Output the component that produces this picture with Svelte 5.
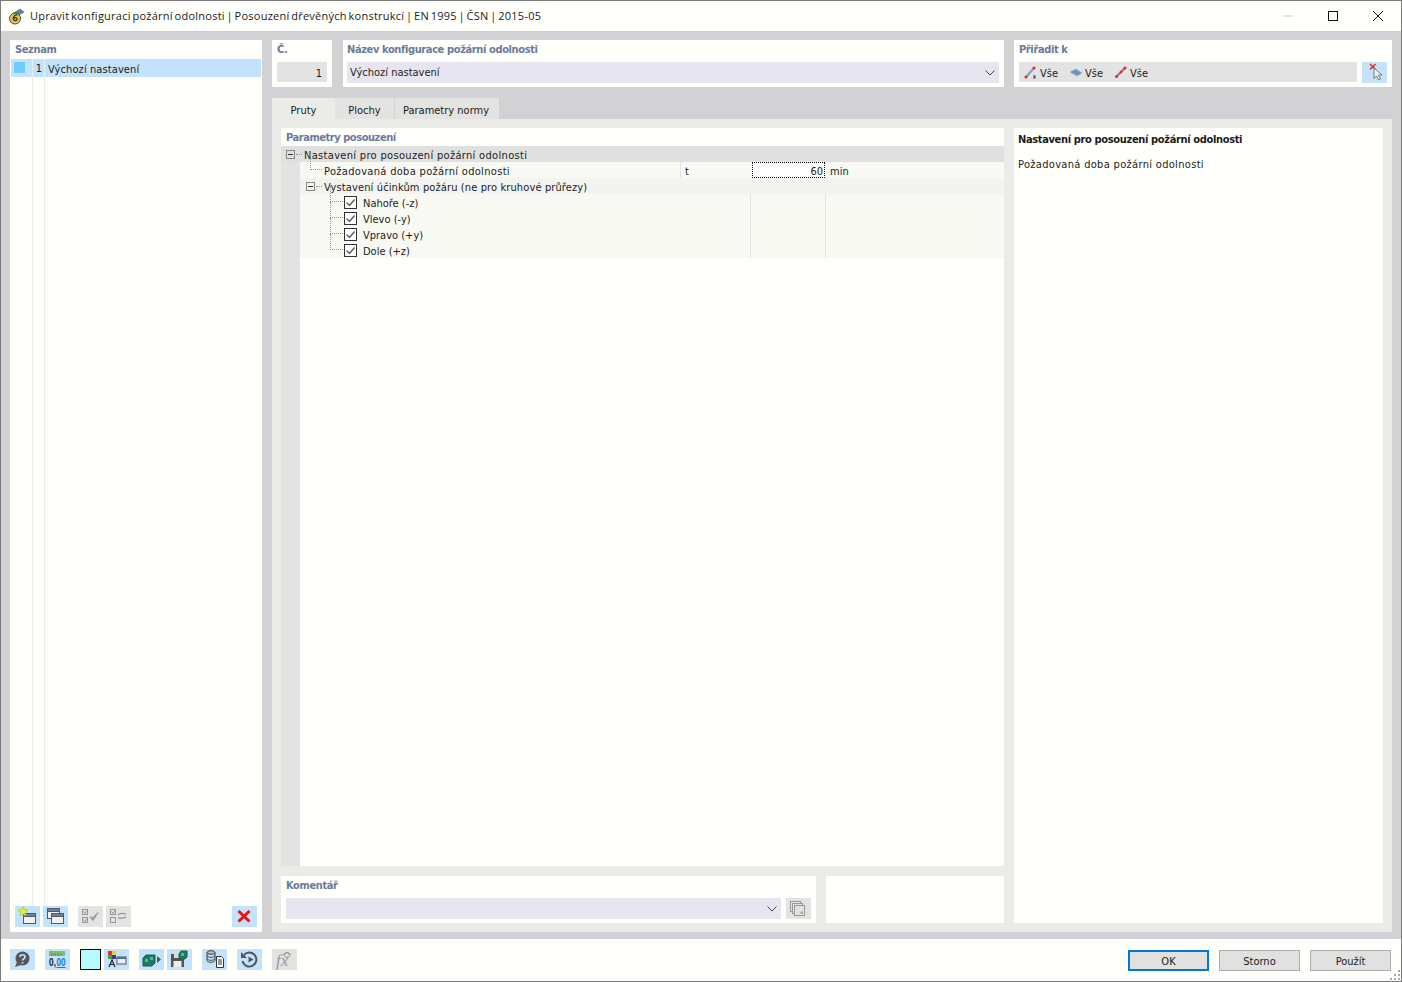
<script>
  const checks = ['Nahoře (-z)', 'Vlevo (-y)', 'Vpravo (+y)', 'Dole (+z)'];
</script>

{#snippet minus()}
  <svg class="box" width="9" height="9" viewBox="0 0 9 9"><rect x=".5" y=".5" width="8" height="8" fill="none" stroke="#888"/><path d="M2 4.5h5" stroke="#333"/></svg>
{/snippet}

{#snippet win(x, y)}
  <rect x={x + .5} y={y + .5} width="12" height="10" fill="#f1f1f1" stroke="#5a5a5a"/>
  <rect x={x + .5} y={y + .5} width="12" height="3" fill="#6a7ea8" stroke="#5a5a5a"/>
{/snippet}

<div class="window">
  <header class="title">
    <svg class="logo" width="17" height="17" viewBox="0 0 17 17">
      <path d="M4 6l8-5 4 3-8 5z" fill="#5d7fa8" stroke="#3e5674" stroke-width=".5"/>
      <circle cx="7" cy="10.500" r="5.500" fill="#e5c64a" stroke="#4b4b3a"/>
      <path d="M9.500 7c-3-.6-4.500 2-4.100 4.300.3 1.700 3.500 1.700 3.700-.2.1-1.700-2.400-1.900-3.500-.6" fill="none" stroke="#333" stroke-width="1.300"/>
    </svg>
    <span class="title-text">Upravit konfiguraci požární odolnosti | Posouzení dřevěných konstrukcí | EN 1995 | ČSN | 2015-05</span>
    <div class="controls">
      <svg width="10" height="10" viewBox="0 0 10 10"><path d="M0 5h10" stroke="#c8c8c8"/></svg>
      <svg width="10" height="10" viewBox="0 0 10 10"><rect x=".5" y=".5" width="9" height="9" fill="none" stroke="#111"/></svg>
      <svg width="10" height="10" viewBox="0 0 10 10"><path d="M0 0l10 10M10 0L0 10" stroke="#111"/></svg>
    </div>
  </header>

  <main class="body">
    <section class="list card">
      <h3>Seznam</h3>
      <div class="list-row">
        <span class="swatch"></span><span class="num">1</span><span class="lname">Výchozí nastavení</span>
      </div>
      <div class="list-rest"><i></i><i></i></div>
      <div class="list-tools">
        <button class="ib on" aria-label="Nový">
          <svg width="25" height="21" viewBox="0 0 25 21">{@render win(8, 7)}<path d="M8 .5l1.500 3.300 3.600.3-2.800 2.300.9 3.500-3.200-1.900-3.200 1.900.9-3.500-2.800-2.300 3.600-.3z" fill="#e4f22a" stroke="#a5b026" stroke-width=".5"/></svg>
        </button>
        <button class="ib on" aria-label="Kopírovat">
          <svg width="25" height="21" viewBox="0 0 25 21">{@render win(4, 2)}{@render win(8, 7)}</svg>
        </button>
        <button class="ib off m8" aria-label="Vybrat">
          <svg width="25" height="21" viewBox="0 0 25 21"><g fill="none" stroke="#999"><rect x="4.500" y="3.500" width="5" height="5"/><rect x="4.500" y="11.500" width="5" height="5"/><path d="M5.500 5.500l1.500 2 2-3M5.500 13.500l1.500 2 2-3"/></g><path d="M12 11l3 3.500 5-8-5 5z" fill="#999" stroke="#999"/></svg>
        </button>
        <button class="ib off" aria-label="Invertovat">
          <svg width="25" height="21" viewBox="0 0 25 21"><g fill="none" stroke="#999"><rect x="4.500" y="3.500" width="5" height="5"/><rect x="4.500" y="11.500" width="5" height="5"/><path d="M5.500 5.500l1.500 2 2-3"/><path d="M12 9c3-3 5-1 8-1M20 11c-3 2-5 1-8 1" stroke-width="1.300"/></g></svg>
        </button>
        <button class="ib on del" aria-label="Smazat">
          <svg width="25" height="21" viewBox="0 0 25 21"><path d="M6.500 5l11 10.500M17.500 5l-11 10.500" stroke="#ee1111" stroke-width="3"/></svg>
        </button>
      </div>
    </section>

    <div class="right">
      <div class="top">
        <section class="card no">
          <h3>Č.</h3>
          <div class="field num-field">1</div>
        </section>
        <section class="card name">
          <h3>Název konfigurace požární odolnosti</h3>
          <div class="field combo"><span>Výchozí nastavení</span>
            <svg width="10" height="6" viewBox="0 0 10 6"><path d="M.5 .5L5 5 9.500 .5" fill="none" stroke="#444"/></svg>
          </div>
        </section>
        <section class="card assign">
          <h3>Přiřadit k</h3>
          <div class="assign-row">
            <div class="field vse">
              <span class="vi"><svg width="15" height="13" viewBox="0 0 15 13"><path d="M2 11L10 2" stroke="#86a0c6" stroke-width="2.200"/><circle cx="2" cy="11" r="1.500" fill="#e22"/><circle cx="10" cy="2" r="1.500" fill="#e22"/><path d="M9 10h3M10.500 10v2M9 12h3" stroke="#333" stroke-width=".8"/></svg>Vše</span>
              <span class="vi"><svg width="15" height="13" viewBox="0 0 15 13"><path d="M1 6l6-3 6 4-5 3z" fill="#6c94c4" stroke="#8fa9c9" stroke-width=".5"/></svg>Vše</span>
              <span class="vi"><svg width="15" height="13" viewBox="0 0 15 13"><path d="M3 10l8-8" stroke="#9a7080" stroke-width="2.200"/><circle cx="2.500" cy="10.500" r="1.500" fill="#e22"/><circle cx="7" cy="6" r="1.300" fill="#e22"/><circle cx="11" cy="2" r="1.500" fill="#e22"/></svg>Vše</span>
            </div>
            <button class="pick" aria-label="Vybrat">
              <svg width="25" height="21" viewBox="0 0 25 21"><path d="M8 2l5.500 5.500M13.500 2L8 7.500" stroke="#e22" stroke-width="1.500"/><path d="M12 6l0 10.500 2.500-2.500 2 4 2-1-2-4 3.500 0z" fill="#f0f0f0" stroke="#777"/></svg>
            </button>
          </div>
        </section>
      </div>

      <nav class="tabs">
        <div class="tab active">Pruty</div>
        <div class="tab t2">Plochy</div>
        <div class="tab t3">Parametry normy</div>
      </nav>

      <div class="tabpanel">
        <div class="leftcol">
          <section class="params">
            <h3>Parametry posouzení</h3>
            <div class="tree">
              <div class="gutter"></div>
              <div class="treebody">
                <div class="tr head">
                  <span class="tog t0">{@render minus()}</span>
                  <span class="txt wide">Nastavení pro posouzení požární odolnosti</span>
                </div>
                <div class="tr val">
                  <span class="c1 wide"><i class="dots d1"></i>Požadovaná doba požární odolnosti</span>
                  <span class="c2 txt">t</span>
                  <span class="c3">60</span>
                  <span class="c4 txt">min</span>
                </div>
                <div class="tr sub">
                  <span class="tog t1">{@render minus()}</span>
                  <span class="txt slight">Vystavení účinkům požáru (ne pro kruhové průřezy)</span>
                </div>
                {#each checks as c}
                  <div class="tr chk">
                    <span class="c1b">
                      <i class="dots d2"></i>
                      <svg class="cb" width="13" height="13" viewBox="0 0 13 13"><rect x=".5" y=".5" width="12" height="12" fill="#fff" stroke="#333"/><path d="M2.500 6.500l3 3 5-6" fill="none" stroke="#555" stroke-width="1.200"/></svg>
                      <span class="txt">{c}</span>
                    </span>
                    <span class="c3b"></span>
                  </div>
                {/each}
              </div>
            </div>
          </section>
          <div class="bottom-row">
            <section class="card comment">
              <h3>Komentář</h3>
              <div class="comment-row">
                <div class="field combo c-combo">
                  <svg width="10" height="6" viewBox="0 0 10 6"><path d="M.5 .5L5 5 9.500 .5" fill="none" stroke="#444"/></svg>
                </div>
                <button class="ib off" aria-label="Kopie">
                  <svg width="25" height="21" viewBox="0 0 25 21"><g fill="#e3e3e3" stroke="#999"><rect x="4.500" y="3.500" width="10" height="10"/><rect x="6.500" y="5.500" width="10" height="10"/><rect x="8.500" y="7.500" width="10" height="10"/></g><rect x="14.500" y="13.500" width="2.500" height="2.500" fill="#aaa"/></svg>
                </button>
              </div>
            </section>
            <section class="card blank"></section>
          </div>
        </div>
        <aside class="desc">
          <strong>Nastavení pro posouzení požární odolnosti</strong>
          <p>Požadovaná doba požární odolnosti</p>
        </aside>
      </div>
    </div>
  </main>

  <footer class="foot">
    <div class="tools">
      <button class="ib on" aria-label="Nápověda"><svg width="25" height="21" viewBox="0 0 25 21"><circle cx="12.500" cy="9.500" r="7" fill="#555"/><path d="M7 13l-2 5 6-2z" fill="#555"/><path d="M10 8c0-3 5-3 5 0 0 2-2.500 1.800-2.500 3.500M12.500 13v1.500" fill="none" stroke="#c2e3fb" stroke-width="1.700"/></svg></button>
      <button class="ib on" aria-label="Jednotky"><svg width="25" height="21" viewBox="0 0 25 21"><rect x="4" y="2" width="16" height="5" fill="#7fbf6a"/><path d="M7 4v3M10 4v3M13 4v3M16 4v3" stroke="#4d8a3d" stroke-width=".8"/><text x="4" y="16.500" class="svgt" textLength="7" lengthAdjust="spacingAndGlyphs">0,</text><text x="11.500" y="16.500" class="svgt blue" textLength="9" lengthAdjust="spacingAndGlyphs">00</text><path d="M11.500 18.500h9" stroke="#2a6fd6"/></svg></button>
      <span class="colorbox"></span>
      <button class="ib on" aria-label="Barvy"><svg width="25" height="21" viewBox="0 0 25 21"><rect x="4" y="2" width="4" height="4" fill="#d33"/><rect x="8" y="2" width="4" height="4" fill="#ec3"/><rect x="4" y="6" width="4" height="4" fill="#3a3"/><rect x="8" y="6" width="4" height="4" fill="#33b"/><rect x="13" y="8" width="9" height="7" fill="#eee" stroke="#555"/><rect x="13" y="8" width="9" height="2" fill="#4d6ea8"/><path d="M5 18l3-7 3 7M6 15.500h4" fill="none" stroke="#222" stroke-width="1.200"/></svg></button>
      <button class="ib on g1" aria-label="Model"><svg width="25" height="21" viewBox="0 0 25 21"><path d="M4 9l3-3h9v8l-3 3H4z" fill="#1f7a63" stroke="#164"/><path d="M6 10h3v3H6zM11 8h3v3h-3z" fill="#5ab59a"/><path d="M18 7l4 3.500-4 3.500z" fill="#555"/></svg></button>
      <button class="ib on" aria-label="Uložit"><svg width="25" height="21" viewBox="0 0 25 21"><path d="M4 5h11l2 2v11H4z" fill="#555"/><rect x="7" y="5" width="6" height="4" fill="#ddd"/><rect x="6.500" y="12" width="8" height="6" fill="#eee"/><path d="M12 5l2-3h6v6l-2 2h-6z" fill="#1f7a63" stroke="#164"/><path d="M14 4h3v3h-3z" fill="#5ab59a"/></svg></button>
      <button class="ib on g2" aria-label="Data"><svg width="25" height="21" viewBox="0 0 25 21"><ellipse cx="9" cy="3.500" rx="4" ry="1.800" fill="#bbb" stroke="#444"/><path d="M5 3.500v8c0 2.400 8 2.400 8 0v-8M5 6.500c0 2.400 8 2.400 8 0M5 9.500c0 2.400 8 2.400 8 0" fill="none" stroke="#444"/><path d="M14.500 7.500h5l2 2v9h-7z" fill="#fff" stroke="#333"/><path d="M16 11h4M16 13h4M16 15h4" stroke="#333"/></svg></button>
      <button class="ib on" aria-label="Zpět"><svg width="25" height="21" viewBox="0 0 25 21"><path d="M7 6a7 7 0 1 1-1.500 6" fill="none" stroke="#555" stroke-width="2"/><path d="M4 3v6h6z" fill="#555"/><path d="M11.500 7.500l5 3-5 3z" fill="#555"/></svg></button>
      <button class="ib off" aria-label="Vzorec"><svg width="25" height="21" viewBox="0 0 25 21"><text x="4" y="17" class="svgf">fx</text><circle cx="15" cy="6" r="2.500" fill="none" stroke="#999"/><path d="M11 6c2-3 6-3 8 0" fill="none" stroke="#999"/></svg></button>
    </div>
    <div class="actions">
      <button class="btn primary">OK</button>
      <button class="btn">Storno</button>
      <button class="btn">Použít</button>
    </div>
    <svg class="grip" width="11" height="11" viewBox="0 0 11 11"><g fill="#aaa"><rect x="8" y="0" width="2" height="2"/><rect x="4" y="4" width="2" height="2"/><rect x="8" y="4" width="2" height="2"/><rect x="0" y="8" width="2" height="2"/><rect x="4" y="8" width="2" height="2"/><rect x="8" y="8" width="2" height="2"/></g></svg>
  </footer>
</div>

<style>
  :global(body) { margin: 0; background: #fff; }
  * { box-sizing: border-box; }
  .window {
    width: 1402px; height: 982px; display: flex; flex-direction: column;
    border: 1px solid #7b7b7b; background: #fffffb;
    font: 11px/16px "DejaVu Sans Condensed", "DejaVu Sans", sans-serif; font-stretch: condensed; color: #1c1c1c; overflow: hidden;
  }
  h3 { margin: 0; padding-top: 1px; font-size: 11px; font-weight: 700; color: #6b7a99; line-height: 16px; letter-spacing: -.38px; }
  button { border: 0; padding: 0; margin: 0; font: inherit; font-stretch: condensed; color: inherit; display: block; }
  svg { display: block; }

  .title { height: 30px; flex: none; display: flex; align-items: center; padding-left: 7px; background: #fffffb; }
  .title-text { margin-left: 5px; font: 11px/16px "Open Sans", sans-serif; font-stretch: normal; letter-spacing: .25px; word-spacing: -1.4px; color: #222; }
  .logo { flex: none; }
  .controls { margin-left: auto; display: flex; align-items: center; gap: 35px; padding-right: 18px; }

  .body { flex: 1; background: #d2d2d5; display: flex; gap: 10px; padding: 9px 9px 7px 9px; min-height: 0; }
  .card { background: #fffffb; }
  .list { width: 252px; display: flex; flex-direction: column; padding: 1px; }
  .list h3 { padding: 1px 4px 0; height: 18px; }
  .list-row { height: 18px; background: #c2e3fb; display: flex; align-items: center; }
  .swatch { width: 11px; height: 11px; background: #6fcdfb; margin: 0 0 2px 3px; }
  .num { width: 13px; height: 18px; text-align: right; margin-left: 7px; padding: 2px 2px 0 0; border: 1px solid #e4f0fa; border-width: 0 1px; }
  .lname { margin-left: 3px; padding-top: 4px; letter-spacing: .1px; line-height: 16px; }
  .list-rest { flex: 1; display: flex; padding-left: 21px; gap: 11px; }
  .list-rest i { width: 1px; background: #ececec; height: 100%; }
  .list-tools { height: 21px; display: flex; align-items: flex-start; margin-bottom: 4px; padding-left: 4px; gap: 3px; }
  .ib { width: 25px; height: 21px; flex: none; }
  .on { background: #c2e3fb; }
  .off { background: #e3e3e3; }
  .m8 { margin-left: 7px; }
  .del { margin-left: auto; margin-right: 4px; }

  .right { flex: 1; display: flex; flex-direction: column; min-width: 0; }
  .top { display: flex; height: 47px; }
  .top section { padding: 1px 5px 0; }
  .no { width: 60px; }
  .top .name { width: 661px; margin-left: 11px; padding: 1px 5px 0 4px; }
  .assign { width: 378px; margin-left: 10px; }
  .field { background: #e3e3e3; height: 20px; margin-top: 4px; }
  .num-field { text-align: right; padding: 4px 5px 0 0; }
  .combo { background: #e7e6f0; display: flex; align-items: center; justify-content: space-between; padding: 0 4px 0 3px; height: 21px; }
  .assign-row { display: flex; justify-content: space-between; }
  .vse { width: 338px; display: flex; align-items: center; padding-left: 5px; padding-top: 3px; }
  .vi { display: flex; align-items: center; width: 45px; }
  .vi svg { margin-right: 1px; margin-top: -3px; }
  .pick { width: 25px; height: 21px; margin-top: 4px; background: #c2e3fb; }

  .tabs { height: 32px; display: flex; align-items: flex-end; }
  .tab { height: 21px; background: #e3e3e1; padding: 5px 0 0; text-align: center; }
  .active { width: 63px; background: #ebebe8; }
  .t2 { width: 59px; }
  .t3 { width: 104px; margin-left: 1px; padding-right: 2px; }

  .tabpanel { flex: 1; background: #ebebe8; display: flex; padding: 9px; gap: 10px; min-height: 0; }
  .leftcol { width: 723px; display: flex; flex-direction: column; gap: 10px; }
  .params { flex: 1; background: #fffffb; display: flex; flex-direction: column; }
  .params h3 { padding: 2px 5px 0; height: 18px; letter-spacing: -.45px; }
  .tree { flex: 1; display: flex; }
  .gutter { width: 19px; background: #e3e3e3; }
  .treebody { flex: 1; position: relative; }
  .tr { height: 16px; display: flex; align-items: center; position: relative; white-space: nowrap; }
  .txt { padding-top: 4px; line-height: 16px; }
  .wide { letter-spacing: .32px; }
  .slight { letter-spacing: .12px; }
  .head { background: #e0e0e0; margin-left: -19px; padding-left: 5px; }
  .head .t0 { margin-right: 9px; }
  .val { background: #f8f9f3; }
  .sub { background: #f3f3f0; padding-left: 6px; }
  .sub .t1 { margin-right: 9px; }
  .tog { display: block; position: relative; flex: none; }
  .tog::after { content: ""; position: absolute; left: 10px; top: 4px; width: 6px; border-top: 1px dotted #999; }
  .chk { background: #f8f9f3; }
  .c1 { width: 381px; height: 16px; border-right: 1px solid #e3e3e0; padding-left: 24px; padding-top: 2px; position: relative; }
  .c2 { width: 71px; padding-left: 4px; }
  .c3 {
    width: 73px; height: 16px; background: #fff; border: 1px dotted #111; text-align: right; padding: 1px 1px 0 0;
    line-height: 15px;
  }
  .c4 { padding-left: 5px; }
  .c1b { width: 450px; height: 16px; display: flex; align-items: center; padding-left: 30px; position: relative; gap: 6px; }
  .c3b { width: 76px; height: 16px; border-left: 1px solid #e3e3e0; border-right: 1px solid #e3e3e0; }
  .dots { position: absolute; display: block; }
  .d1 { left: 10px; top: -8px; width: 12px; height: 16px; border-left: 1px dotted #999; border-bottom: 1px dotted #999; }
  .d2 { left: 30px; top: -8px; width: 13px; height: 16px; border-left: 1px dotted #999; border-bottom: 1px dotted #999; }
  .cb { flex: none; margin-left: 14px; }

  .bottom-row { display: flex; height: 47px; gap: 10px; }
  .comment { width: 535px; padding: 1px 5px 0; }
  .blank { width: 178px; }
  .comment-row { display: flex; justify-content: space-between; margin-top: 4px; }
  .c-combo { width: 495px; margin-top: 0; justify-content: flex-end; padding-right: 4px; }

  .desc { width: 369px; background: #fffffb; padding: 4px 4px; }
  .desc strong { font-weight: 700; display: block; color: #1c1c1c; letter-spacing: -.35px; }
  .desc p { margin: 9px 0 0; letter-spacing: .32px; }

  .foot { height: 42px; flex: none; position: relative; display: flex; justify-content: space-between; padding: 10px 10px 0 9px; }
  .tools { display: flex; gap: 10px; align-items: flex-start; }
  .colorbox { width: 21px; height: 21px; background: #b5fbff; border: 1px solid #000; margin-right: -7px; }
  .g1 { margin-right: -7px; }
  .actions { display: flex; gap: 10px; margin-top: 1px; }
  .btn { width: 81px; height: 21px; background: #e1e1e1; border: 1px solid #adadad; text-align: center; line-height: 20px; padding-top: 1px; }
  .primary { border: 2px solid #0078d7; line-height: 18px; }
  .grip { position: absolute; right: 0; bottom: 0; }
  .svgt { font: 600 11px "Liberation Sans", sans-serif; fill: #222; }
  .svgt.blue { fill: #2a6fd6; }
  .svgf { font: italic 17px "Liberation Serif", serif; fill: #999; }
</style>
